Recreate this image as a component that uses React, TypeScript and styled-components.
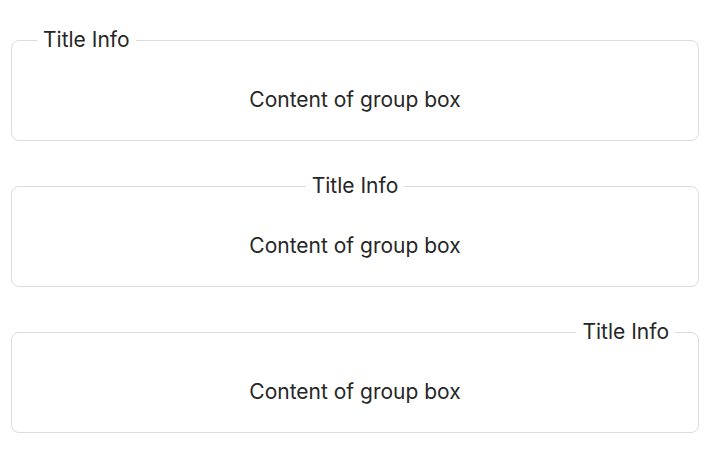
import React from 'react';
import styled, { createGlobalStyle } from 'styled-components';

const GlobalStyle = createGlobalStyle`
  body {
    margin: 0;
    background: #ffffff;
    font-family: Inter, "Noto Sans", sans-serif;
  }
`;

type Align = 'left' | 'center' | 'right';

const Page = styled.div`
  width: 688px;
  padding: 28px 0 0 11px;
  display: flex;
  flex-direction: column;
  gap: 33px;
`;

const Box = styled.fieldset`
  margin: 0;
  padding: 35px 16px 28px;
  border: 1px solid #dcdcdc;
  border-radius: 8px;
  min-width: 0;
`;

const Legend = styled.legend<{ $align: Align }>`
  padding: 0 6px;
  font-size: 21px;
  line-height: 24px;
  color: #262626;
  margin-left: ${(p) => (p.$align === 'left' ? '9px' : 'auto')};
  margin-right: ${(p) => (p.$align === 'right' ? '7px' : p.$align === 'center' ? 'auto' : '0')};
`;

const Content = styled.div`
  text-align: center;
  font-size: 21px;
  line-height: 25px;
  color: #262626;
`;

const GroupBox = ({ align }: { align: Align }) => (
  <Box>
    <Legend $align={align}>Title Info</Legend>
    <Content>Content of group box</Content>
  </Box>
);

export default function App() {
  return (
    <>
      <GlobalStyle />
      <Page>
        <GroupBox align="left" />
        <GroupBox align="center" />
        <GroupBox align="right" />
      </Page>
    </>
  );
}
